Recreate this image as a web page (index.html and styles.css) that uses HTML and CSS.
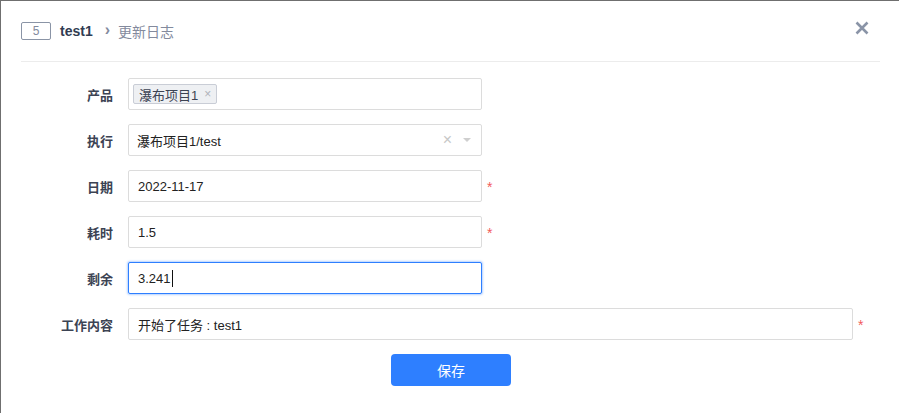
FILE: index.html
```html
<!DOCTYPE html>
<html lang="zh-CN">
<head>
<meta charset="utf-8">
<title>更新日志</title>
<link rel="stylesheet" href="styles.css">
</head>
<body>
<div class="modal">
  <div class="header">
    <span class="badge">5</span>
    <span class="title">test1</span>
    <span class="chev">›</span>
    <span class="sub">更新日志</span>
    <span class="close" aria-label="关闭">
      <svg width="14" height="14" viewBox="0 0 14 14"><path d="M1.5 1.5 L12.5 12.5 M12.5 1.5 L1.5 12.5" stroke="#8a94a7" stroke-width="2.6" stroke-linecap="butt" fill="none"/></svg>
    </span>
  </div>
  <div class="form">
    <div class="row">
      <label class="label">产品</label>
      <div class="field">
        <span class="tag">瀑布项目1<span class="tag-x">×</span></span>
      </div>
      <span class="req"></span>
    </div>
    <div class="row">
      <label class="label">执行</label>
      <div class="field select">
        <span class="val">瀑布项目1/test</span>
        <span class="sel-x">×</span>
        <span class="caret"></span>
      </div>
      <span class="req"></span>
    </div>
    <div class="row">
      <label class="label">日期</label>
      <div class="field"><span class="val">2022-11-17</span></div>
      <span class="req">*</span>
    </div>
    <div class="row">
      <label class="label">耗时</label>
      <div class="field"><span class="val">1.5</span></div>
      <span class="req">*</span>
    </div>
    <div class="row">
      <label class="label">剩余</label>
      <div class="field focus"><span class="val">3.241</span><span class="cursor"></span></div>
      <span class="req"></span>
    </div>
    <div class="row wide">
      <label class="label">工作内容</label>
      <div class="field"><span class="val">开始了任务 : test1</span></div>
      <span class="req">*</span>
    </div>
    <div class="actions">
      <button class="btn">保存</button>
    </div>
  </div>
</div>
</body>
</html>
```
FILE: styles.css
```css
html, body {
  margin: 0;
  padding: 0;
  background: #fff;
}
body {
  font-family: "Liberation Sans", "Noto Sans CJK SC", sans-serif;
  font-size: 13px;
  color: #313c52;
}
.modal {
  box-sizing: border-box;
  width: 899px;
  height: 413px;
  border-top: 1px solid #6f6f6f;
  border-left: 1px solid #6f6f6f;
  overflow: hidden;
}
.header {
  display: flex;
  align-items: center;
  height: 60px;
  margin: 0 19px 0 20px;
  border-bottom: 1px solid #ececec;
}
.badge {
  box-sizing: border-box;
  width: 30px;
  height: 18px;
  border: 1px solid #8a94a6;
  border-radius: 2px;
  color: #838a9d;
  font-size: 12px;
  line-height: 16px;
  text-align: center;
}
.title {
  margin-left: 9px;
  font-weight: bold;
  font-size: 14px;
  color: #313c52;
}
.chev {
  margin-left: 12px;
  color: #838a9d;
  font-size: 16px;
  font-weight: bold;
  line-height: 14px;
  position: relative;
  top: -1px;
}
.sub {
  margin-left: 8px;
  font-size: 14px;
  color: #838a9d;
}
.close {
  margin-left: auto;
  margin-right: 11px;
  display: flex;
  position: relative;
  top: -3px;
}
.form {
  padding-top: 16px;
  display: flex;
  flex-direction: column;
  gap: 14px;
}
.row {
  display: grid;
  grid-template-columns: 112px 354px 20px;
  column-gap: 15px;
  align-items: center;
  height: 32px;
}
.row.wide {
  grid-template-columns: 112px 725px 20px;
}
.label {
  text-align: right;
  font-weight: bold;
  color: #3c4353;
  font-size: 13px;
}
.field {
  box-sizing: border-box;
  height: 32px;
  border: 1px solid #dcdcdc;
  border-radius: 2px;
  display: flex;
  align-items: center;
  padding: 0 9px;
  color: #222;
  background: #fff;
}
.field.focus {
  border-color: #2e7fff;
  box-shadow: 0 0 2px 1px rgba(46, 127, 255, 0.35);
}
.cursor {
  display: inline-block;
  width: 1px;
  height: 17px;
  background: #111;
  margin-left: 1px;
}
.select .val {
  flex: 1;
  margin-left: -1px;
}
.sel-x {
  color: #c7c7c7;
  font-size: 16px;
  margin-right: 11px;
}
.caret {
  width: 0;
  height: 0;
  border-left: 4px solid transparent;
  border-right: 4px solid transparent;
  border-top: 4px solid #cfcfcf;
  margin-right: 1px;
}
.tag {
  box-sizing: border-box;
  height: 20px;
  margin-left: -5px;
  padding: 0 5px 0 5px;
  border: 1px solid #c9cdd6;
  border-radius: 2px;
  background: #eef0f3;
  color: #3c4353;
  display: flex;
  align-items: center;
}
.tag-x {
  color: #b0b3ba;
  font-size: 12px;
  margin-left: 6px;
}
.req {
  margin-left: -10px;
  color: #f25a5a;
  font-size: 14px;
  position: relative;
  top: 1px;
}
.actions {
  display: flex;
  justify-content: center;
  padding-left: 2px;
}
.btn {
  width: 120px;
  height: 32px;
  border: none;
  border-radius: 4px;
  background: #2e7fff;
  color: #fff;
  font-family: "Liberation Sans", "Noto Sans CJK SC", sans-serif;
  font-size: 14px;
  padding: 0;
}
```
